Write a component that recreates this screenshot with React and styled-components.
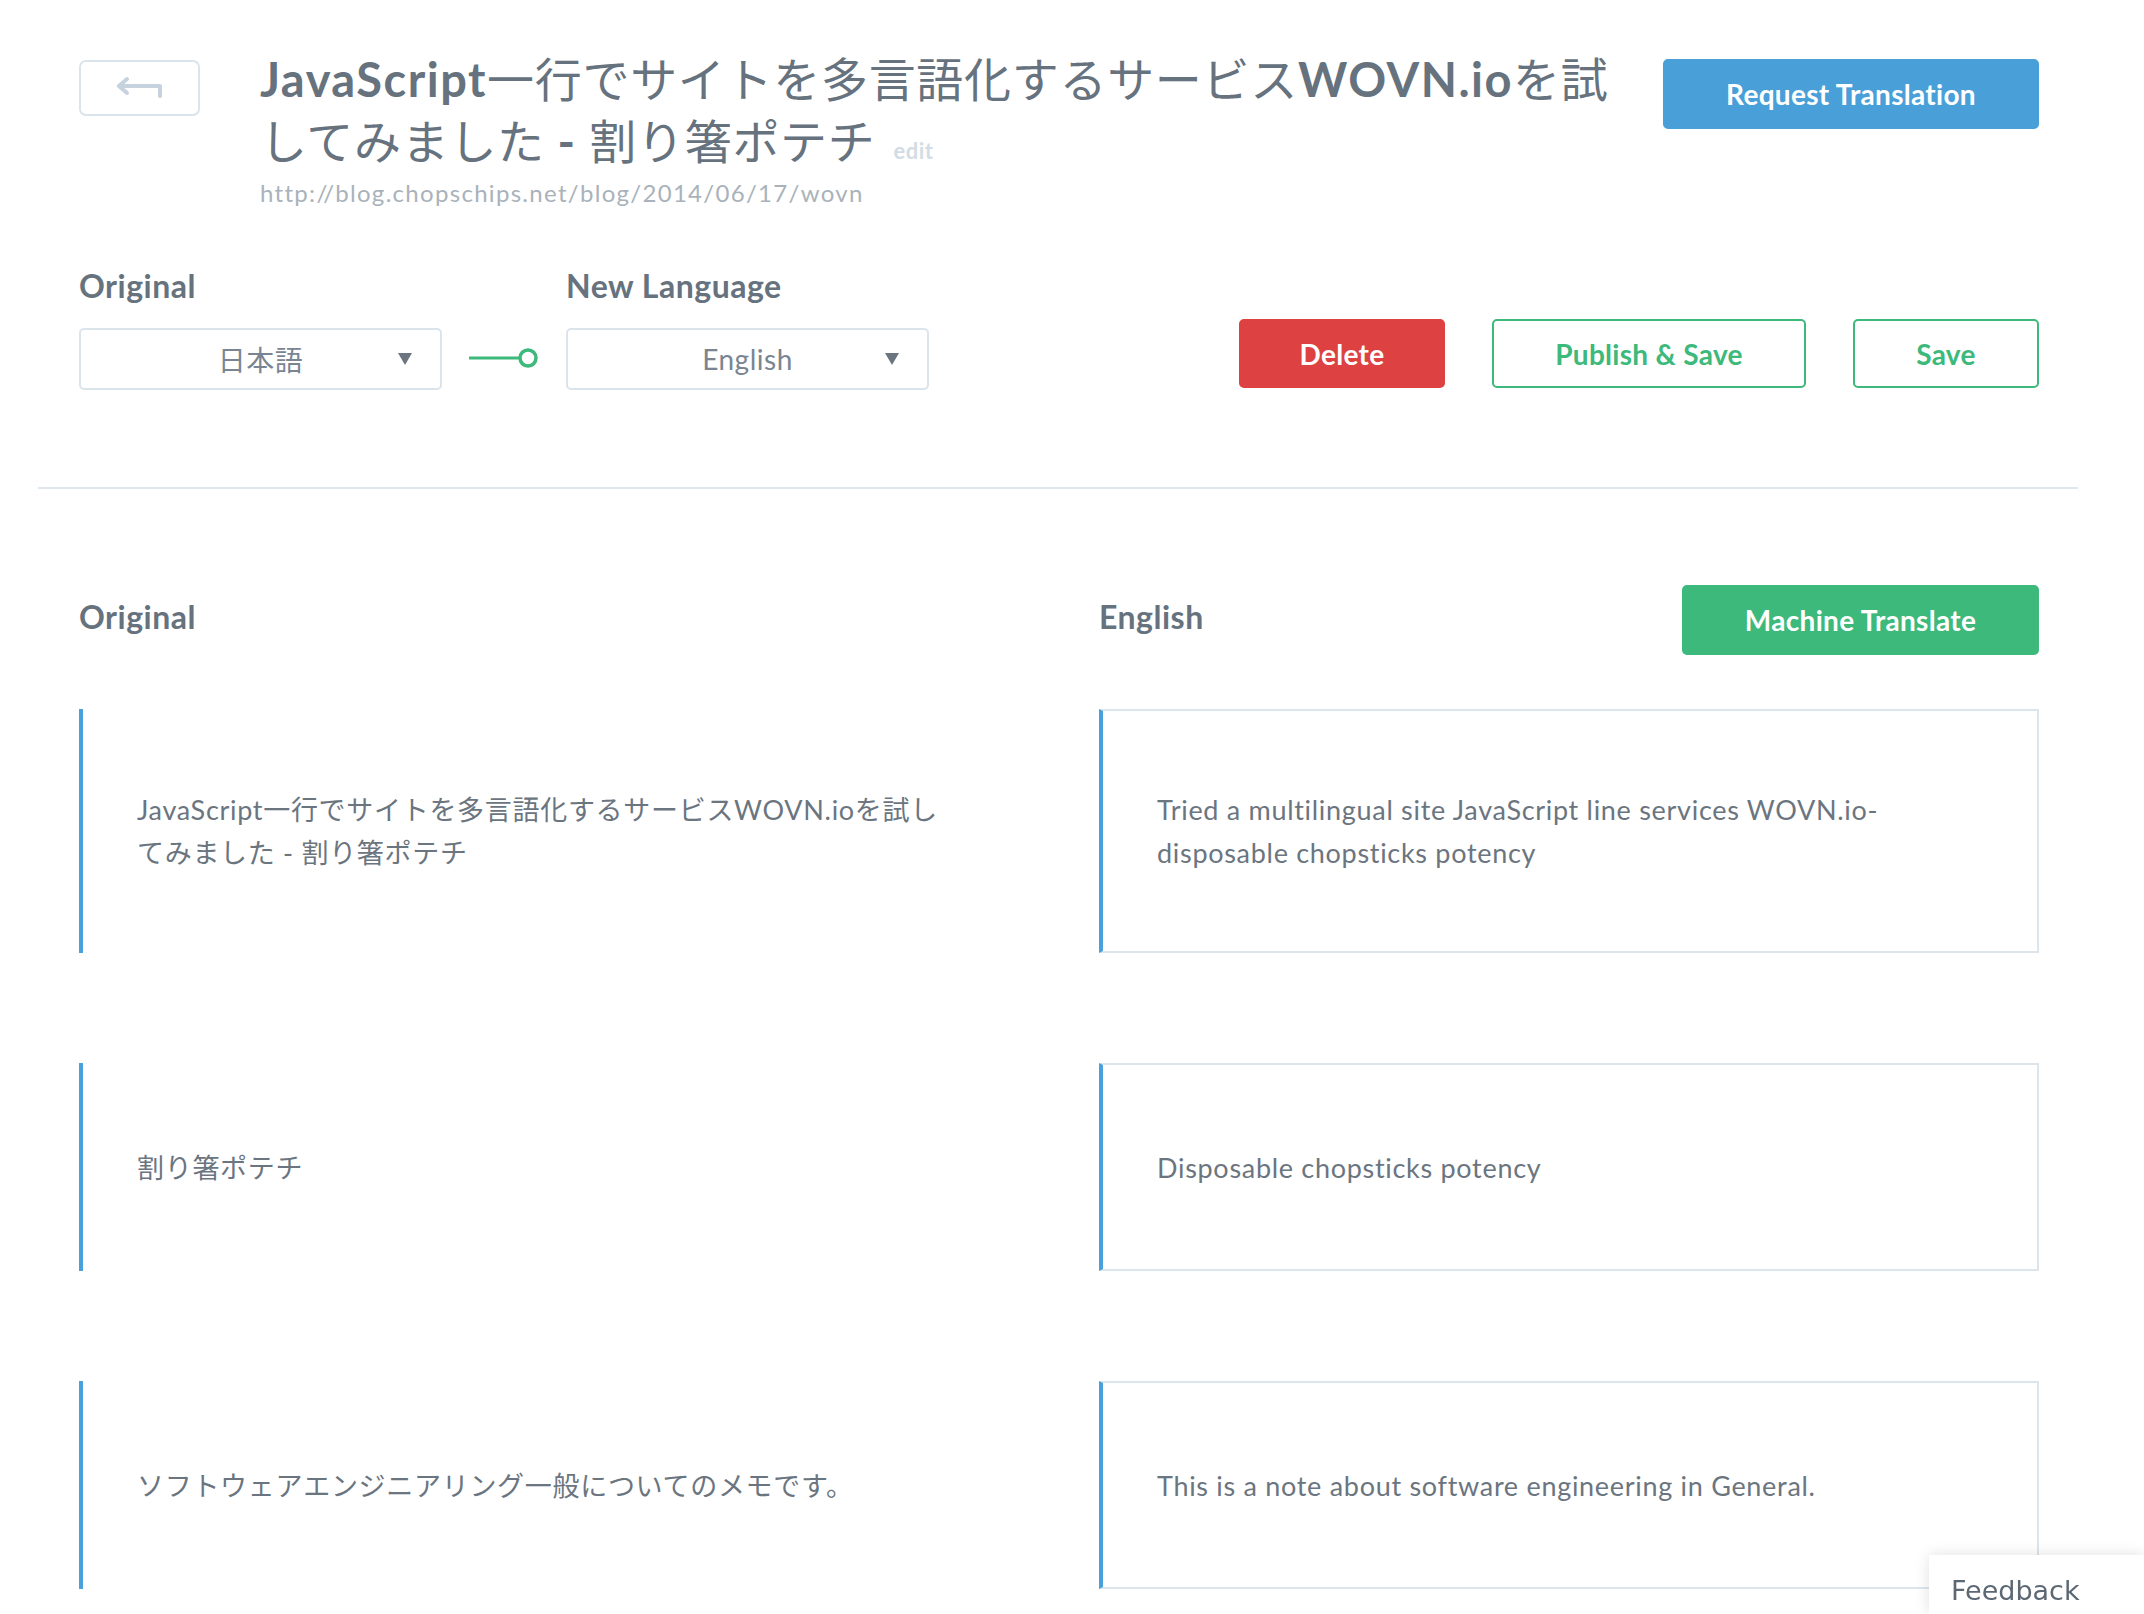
import React from "react";
import styled, { createGlobalStyle } from "styled-components";

const GlobalStyle = createGlobalStyle`
  body {
    margin: 0;
    background: #fff;
    font-family: Lato, "Noto Sans CJK JP", sans-serif;
    color: #66727e;
  }
`;

const Page = styled.div`
  width: 2040px;
  padding: 59px 0 0 38px;
`;

const Inner = styled.div`
  padding: 0 39px 0 41px;
`;

const HeaderRow = styled.div`
  display: flex;
  align-items: flex-start;
`;

const BackButton = styled.button`
  width: 121px;
  height: 56px;
  margin-top: 1px;
  flex-shrink: 0;
  border: 2px solid #dce4eb;
  border-radius: 7px;
  background: #fff;
  display: flex;
  align-items: center;
  justify-content: center;
  padding: 0;
`;

const TitleBlock = styled.div`
  flex: 1;
  margin: 0 20px 0 60px;
`;

const Title = styled.h1`
  margin: -11px 0 0;
  font-size: 47px;
  line-height: 62px;
  font-weight: 400;
  letter-spacing: 0.7px;
  color: #66727e;
`;

const Latin = styled.span`
  font-weight: 700;
  letter-spacing: 1.5px;
`;

const EditLink = styled.span`
  margin-left: 18px;
  font-size: 22px;
  line-height: 1;
  font-weight: 700;
  letter-spacing: 0.5px;
  color: #d2dce5;
`;

const Url = styled.div`
  margin-top: 6px;
  font-size: 24px;
  line-height: 30px;
  color: #a9b2ba;
  letter-spacing: 1.3px;
`;

const Button = styled.button`
  height: ${(p) => p.h || 69}px;
  width: ${(p) => p.w}px;
  flex-shrink: 0;
  border-radius: 5px;
  font-family: Lato, sans-serif;
  font-size: 28px;
  font-weight: 700;
  letter-spacing: 0.3px;
  border: 2px solid ${(p) => p.color};
  background: ${(p) => (p.outline ? "#fff" : p.color)};
  color: ${(p) => (p.outline ? p.color : "#fff")};
  padding: 0;
`;

const ControlsRow = styled.div`
  display: flex;
  align-items: flex-end;
  margin-top: 58px;
`;

const LangGroup = styled.div`
  display: flex;
  flex-direction: column;
`;

const Label = styled.div`
  font-size: 32px;
  line-height: 40px;
  font-weight: 700;
  letter-spacing: 0.5px;
  color: #66727e;
  margin-bottom: 22px;
`;

const Select = styled.div`
  width: 363px;
  height: 62px;
  box-sizing: border-box;
  border: 2px solid #dce4eb;
  border-radius: 5px;
  display: grid;
  grid-template-columns: 70px 1fr 70px;
  align-items: center;
  font-size: 28px;
  letter-spacing: 0.5px;
  color: #7a8591;
`;

const SelectValue = styled.span`
  grid-column: 2;
  text-align: center;
`;

const Caret = styled.span`
  justify-self: center;
  width: 0;
  height: 0;
  border-left: 7px solid transparent;
  border-right: 7px solid transparent;
  border-top: 12px solid #6b7580;
`;

const Connector = styled.svg`
  margin: 0 27px 21px;
  align-self: flex-end;
`;

const Actions = styled.div`
  margin-left: auto;
  display: flex;
  gap: 47px;
  margin-bottom: 2px;
`;

const Divider = styled.hr`
  margin: 97px 0 0;
  border: 0;
  height: 2px;
  background: #e0e7ee;
`;

const Grid = styled.div`
  display: grid;
  grid-template-columns: 1fr 940px;
  column-gap: 80px;
  row-gap: ${(p) => p.gap || 0}px;
  margin-top: ${(p) => p.top}px;
`;

const ColHead = styled.div`
  display: flex;
  align-items: center;
  justify-content: space-between;
  height: 70px;
`;

const HeadText = styled.h2`
  margin: -8px 0 0;
  font-size: 32px;
  font-weight: 700;
  letter-spacing: 0.5px;
  color: #66727e;
`;

const Cell = styled.div`
  box-sizing: border-box;
  min-height: 208px;
  display: flex;
  align-items: center;
  padding: 77px 58px 77px 54px;
  font-size: 27px;
  line-height: 43px;
  letter-spacing: 0.7px;
  color: #6b7580;
  border-left: 4px solid #4aa0db;
  ${(p) =>
    p.card &&
    `
    border-top: 2px solid #dde5ec;
    border-right: 2px solid #dde5ec;
    border-bottom: 2px solid #dde5ec;
  `}
`;

const Feedback = styled.div`
  position: fixed;
  right: 0;
  bottom: 0;
  width: 215px;
  height: 59px;
  box-sizing: border-box;
  padding: 16px 0 0 22px;
  background: #fff;
  box-shadow: 0 0 14px rgba(0, 0, 0, 0.12);
  font-family: "DejaVu Sans", Verdana, sans-serif;
  font-size: 27px;
  line-height: 40px;
  color: #5c6873;
`;

const rows = [
  {
    original: "JavaScript一行でサイトを多言語化するサービスWOVN.ioを試してみました - 割り箸ポテチ",
    translated: "Tried a multilingual site JavaScript line services WOVN.io-disposable chopsticks potency",
  },
  { original: "割り箸ポテチ", translated: "Disposable chopsticks potency" },
  {
    original: "ソフトウェアエンジニアリング一般についてのメモです。",
    translated: "This is a note about software engineering in General.",
  },
];

function BackIcon() {
  return (
    <svg width="48" height="24" viewBox="0 0 48 24" fill="none" stroke="#c6d2de" strokeWidth="4" strokeLinecap="round" strokeLinejoin="round">
      <path d="M11 3 L3 10 L11 17" />
      <path d="M3 10 H44 V20" />
    </svg>
  );
}

export default function App() {
  return (
    <>
      <GlobalStyle />
      <Page>
        <Inner>
          <HeaderRow>
            <BackButton>
              <BackIcon />
            </BackButton>
            <TitleBlock>
              <Title>
                <Latin>JavaScript</Latin>一行でサイトを多言語化するサービス<Latin>WOVN.io</Latin>を試してみました <Latin>-</Latin> 割り箸ポテチ
                <EditLink>edit</EditLink>
              </Title>
              <Url>http://blog.chopschips.net/blog/2014/06/17/wovn</Url>
            </TitleBlock>
            <Button w={376} h={70} color="#49a0d9">Request Translation</Button>
          </HeaderRow>

          <ControlsRow>
            <LangGroup>
              <Label>Original</Label>
              <Select>
                <SelectValue>日本語</SelectValue>
                <Caret />
              </Select>
            </LangGroup>
            <Connector width="70" height="22" viewBox="0 0 70 22">
              <line x1="0" y1="11" x2="51" y2="11" stroke="#3cb97b" strokeWidth="3" />
              <circle cx="59" cy="11" r="8" fill="#fff" stroke="#3cb97b" strokeWidth="3.5" />
            </Connector>
            <LangGroup>
              <Label>New Language</Label>
              <Select>
                <SelectValue>English</SelectValue>
                <Caret />
              </Select>
            </LangGroup>
            <Actions>
              <Button w={206} color="#de4141">Delete</Button>
              <Button w={314} color="#3cb97b" outline>Publish &amp; Save</Button>
              <Button w={186} color="#3cb97b" outline>Save</Button>
            </Actions>
          </ControlsRow>
        </Inner>

        <Divider />

        <Inner>
          <Grid top={96}>
            <ColHead>
              <HeadText>Original</HeadText>
            </ColHead>
            <ColHead>
              <HeadText>English</HeadText>
              <Button w={357} h={70} color="#3cb97b">Machine Translate</Button>
            </ColHead>
          </Grid>

          <Grid top={54} gap={110}>
            {rows.map((r, i) => (
              <React.Fragment key={i}>
                <Cell>{r.original}</Cell>
                <Cell card>{r.translated}</Cell>
              </React.Fragment>
            ))}
          </Grid>
        </Inner>
      </Page>
      <Feedback>Feedback</Feedback>
    </>
  );
}
